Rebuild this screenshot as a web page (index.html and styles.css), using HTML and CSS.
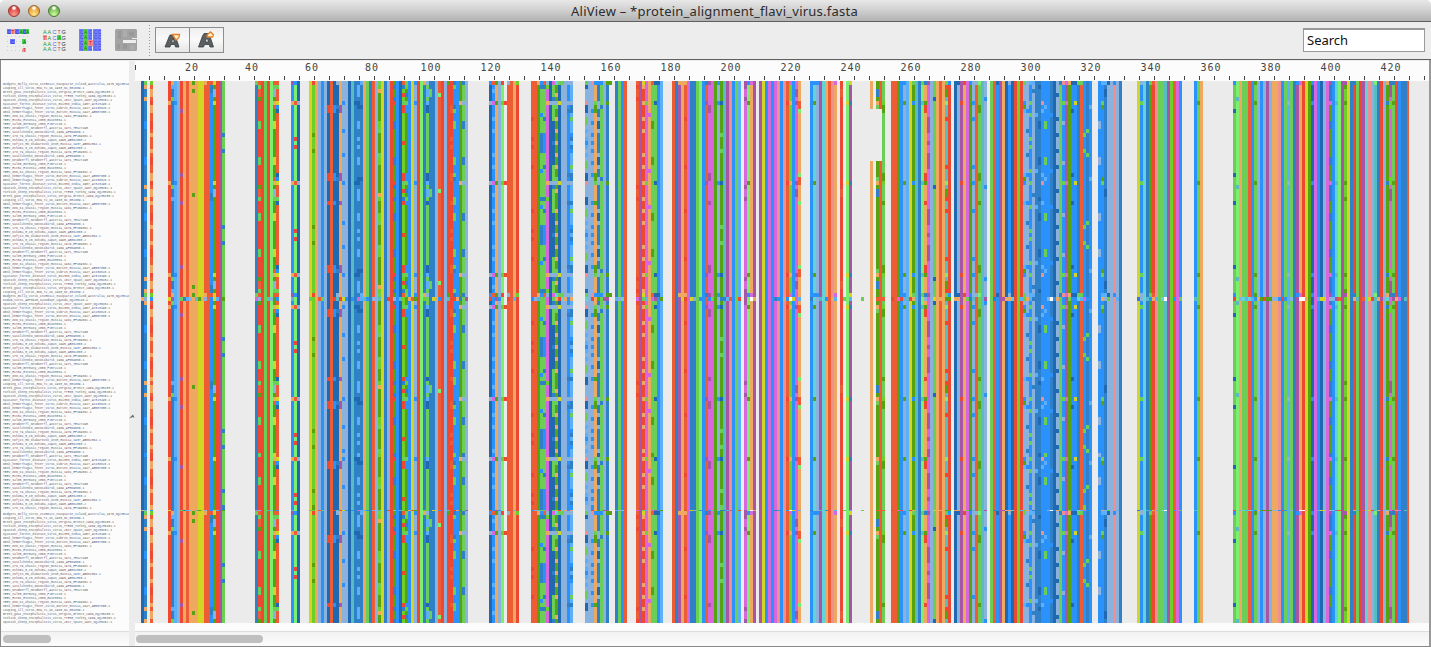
FILE: index.html
```html
<!DOCTYPE html>
<html lang="en">
<head>
<meta charset="utf-8">
<title>AliView</title>
<link rel="stylesheet" href="styles.css">
</head>
<body>
<div class="window">
  <header class="titlebar">
    <div class="lights"><i class="light red"></i><i class="light amber"></i><i class="light green"></i></div>
    <h1 class="title">AliView – *protein_alignment_flavi_virus.fasta</h1>
  </header>
  <div class="toolbar">
    <div class="tools">
      <svg class="tool" viewBox="0 0 24 24">
        <path fill="#6b76ff" d="M1 0h4v5H1zM9 0h4v5H9zM4 10h5v5H4z"/><path fill="#f29a9a" d="M5 0h4v5H5zM16 20h4v3h-4z"/><path fill="#4fd04f" d="M13 0h4v5h-4zM20 0h3v5h-3zM16 10h4v5h-4z"/><path fill="#6b76ff" d="M17 0h3v5h-3z"/>
        <path stroke="#ccd" stroke-dasharray="1 3" d="M1 7.5h22M1 12.500h3M10 12.500h5M21 12.500h2M1 17.500h22M1 21.500h15"/>
        <g class="tiny"><text x="1.500" y="4.500">C</text><text x="5.500" y="4.500" fill="#c00">T</text><text x="9.500" y="4.500">C</text><text x="13.500" y="4.500" fill="#063">A</text><text x="17" y="4.500">C</text><text x="20" y="4.500" fill="#063">A</text><text x="5" y="14.500">C</text><text x="17" y="14.500" fill="#063">A</text><text x="17" y="23" fill="#c00">T</text></g>
      </svg>
      <svg class="tool" viewBox="0 0 24 24">
        <path fill="#f29a9a" d="M1 6h4v5H1z"/><path fill="#4fd04f" d="M15 6h4v5h-4z"/>
        <g class="tiny big">
          <g fill="#1a9a2a"><text x="1" y="4.500">A</text><text x="5.500" y="4.500">A</text><text x="5.500" y="10.500">A</text><text x="15.500" y="10.500">A</text><text x="1" y="16.500">A</text><text x="5.500" y="16.500">A</text><text x="1" y="22">A</text><text x="5.500" y="22">A</text></g>
          <g fill="#5566e8"><text x="10.500" y="4.500">C</text><text x="10.500" y="10.500">C</text><text x="10.500" y="16.500">C</text><text x="10.500" y="22">C</text></g>
          <g fill="#e04040"><text x="15.500" y="4.500">T</text><text x="1" y="10.500">T</text><text x="15.500" y="16.500">T</text><text x="15.500" y="22">T</text></g>
          <g fill="#333"><text x="19.500" y="4.500">G</text><text x="19.500" y="10.500">G</text><text x="19.500" y="16.500">G</text><text x="19.500" y="22">G</text></g>
        </g>
      </svg>
      <svg class="tool" viewBox="0 0 24 24">
        <path fill="#7480ff" d="M1 0h5v22H1zM10 0h4v22h-4zM15 0h8v22h-8z"/><path fill="#55cf45" d="M5 0h5v22H5z"/><path fill="#f08a8a" d="M10 11h5v6h-5z"/>
        <g class="tiny"><g fill="#3b44c8"><text x="2" y="4.500">C</text><text x="2" y="10">C</text><text x="2" y="15.500">C</text><text x="2" y="21">C</text><text x="11" y="4.500">C</text><text x="11" y="10">C</text><text x="11" y="21">C</text><text x="16" y="4.500">C</text><text x="16" y="10">C</text><text x="16" y="15.500">C</text><text x="16" y="21">C</text><text x="20" y="4.500">C</text><text x="20" y="10">C</text><text x="20" y="15.500">C</text><text x="20" y="21">C</text></g><g fill="#187818"><text x="6" y="4.500">A</text><text x="6" y="10">A</text><text x="6" y="15.500">A</text><text x="6" y="21">A</text></g><text x="11" y="16" fill="#c00">T</text></g>
      </svg>
      <svg class="tool" viewBox="0 0 24 24">
        <rect x="1" y="0" width="22" height="22" rx="1.500" fill="#a3a3a3"/><path fill="#999" d="M4 2h3v8H4zM9 15h4v5H9zM15 3h5v4h-5zM3 15h3v5H3z"/><path fill="#acacac" d="M9 1h4v7H9zM16 16h5v5h-5z"/><path fill="#ededed" d="M9 11h13v3H9zM18 9h5v1h-5z"/>
      </svg>
    </div>
    <div class="dots"></div>
    <div class="pair">
      <button class="btn"><svg viewBox="0 0 20 20" width="20" height="20"><path class="glyph" d="M7 5h5l4 12h-3.500l-.8-2.500H7.800L7 17H2l4-10zM8.500 12.200h3L10 8z"/><path class="pen" d="M9.500 4.500h7l-.5 3-3 2.500z"/></svg></button>
      <button class="btn"><svg viewBox="0 0 20 20" width="20" height="20"><path class="glyph" d="M7 3.500h5L16.500 17H13l-.8-2.500H7.500L6.500 17H1.500l4-11zM8.200 12h3.300L10 7z"/><path class="pen" d="M10 7l.5-2.500L13.500 2l3 3-1 2z"/></svg></button>
    </div>
    <div class="search">Search</div>
  </div>
  <main class="main">
    <section class="names">
      <div class="namelist" id="names"></div>
      <div class="scroll"><span class="thumb small"></span></div>
    </section>
    <div class="divider"><svg width="6" height="6" viewBox="0 0 6 6"><path d="M0 4.500 4 .5 5.500 4 4 3z" fill="#666"/></svg></div>
    <section class="align">
      <div class="ruler" id="ruler"></div>
      <canvas class="grid" id="grid" width="1294" height="542"></canvas>
      <div class="gap"></div>
      <div class="scroll"><span class="thumb"></span></div>
    </section>
  </main>
</div>
<script src="app.js"></script>
</body>
</html>
```
FILE: styles.css
```css
* { box-sizing: border-box; }
body { margin: 0; background: #fff; font-family: "Noto Sans", "Open Sans", sans-serif; }
.window { display: flex; flex-direction: column; width: 1431px; height: 647px; overflow: hidden; background: #ededed; border-radius: 5px 5px 0 0; }
.titlebar { display: grid; grid-template-columns: 80px 1fr 80px; align-items: center; height: 22px; border-bottom: 1px solid #606060; background: linear-gradient(#e8e8e8, #cfcfcf 50%, #b2b2b2); }
.lights { display: flex; gap: 8px; padding-left: 8px; }
.light { width: 12px; height: 12px; border-radius: 50%; border: 1px solid #7a3a30; }
.red { background: radial-gradient(circle at 50% 20%, #fff 0 8%, transparent 30%), radial-gradient(circle at 50% 85%, #ff9c90, #d8403a 70%); border-color: #98383a; }
.amber { background: radial-gradient(circle at 50% 20%, #fff 0 8%, transparent 30%), radial-gradient(circle at 50% 85%, #ffe890, #e89a30 70%); border-color: #95642a; }
.green { background: radial-gradient(circle at 50% 20%, #fff 0 8%, transparent 30%), radial-gradient(circle at 50% 85%, #d0ff9a, #69b04a 70%); border-color: #4b7833; }
.title { margin: 0 2px 0 0; text-align: center; font-size: 13px; line-height: 20px; font-weight: 400; letter-spacing: .24px; color: #2c2c2c; white-space: nowrap; }
.toolbar { display: flex; height: 38px; padding: 5px 6px 0 6px; border-bottom: 1px solid #606060; background: #ededed; }
.tools { display: flex; gap: 12px; padding-top: 2px; }
.tool { width: 24px; height: 24px; }
.tiny { font: 4.5px "Liberation Sans", sans-serif; fill: #22b; }
.big { font-size: 5.5px; }
.dots { width: 2px; height: 31px; margin: -2px 4px 0 11px; background: repeating-linear-gradient(#999 0 1px, transparent 1px 3px); background-size: 1px 100%; background-repeat: no-repeat; }
.pair { display: flex; height: 26px; }
.btn { display: flex; align-items: center; justify-content: center; width: 35px; height: 26px; padding: 0; border: 1px solid #8e8e8e; background: linear-gradient(#eee, #fafafa 45%, #e6e6e6); }
.btn + .btn { width: 35px; margin-left: -1px; }
.glyph { fill: #5a5f61; stroke: #383c3d; stroke-width: .8; fill-rule: evenodd; }
.pen { fill: #fff0c8; stroke: #e5812a; stroke-width: 1.300; }
.search { width: 122px; height: 24px; margin: 1px 0 0 auto; padding-left: 3px; border: 1px solid #999; border-top: 2px solid #999; background: #fff; font-size: 13px; line-height: 20px; color: #111; }
.main { display: flex; flex: 1; border-left: 1px solid #888; border-right: 2px solid #999; border-bottom: 1px solid #888; padding-top: 1px; }
.names { display: flex; flex-direction: column; width: 128px; background: #fcfcfc; }
.namelist { flex: 1; overflow: hidden; padding: 21px 0 0 2px; font: 3.08px "Liberation Mono", monospace; color: #5c5f70; }
.name { height: 4px; line-height: 4px; white-space: nowrap; }
.shim { height: 2px; }
.divider { display: flex; width: 6px; padding-top: 353px; background: #ececec; }
.align { display: flex; flex-direction: column; width: 1294px; background: #fcfcfc; }
.ruler { position: relative; height: 20px; }
.tick { position: absolute; top: 15px; width: 1px; height: 4px; background: #444; }
.tick.first { top: 4px; height: 5px; }
.mark { position: absolute; top: 0; width: 40px; text-align: center; font: 10px/13px "DejaVu Sans Mono", monospace; letter-spacing: 1px; color: #444; }
.grid { display: block; width: 1294px; height: 542px; }
.gap { flex: 1; }
.scroll { height: 15px; padding: 3px 0 0 1px; border-top: 1px solid #ddd; background: linear-gradient(#f2f2f2, #fcfcfc); }
.thumb { display: block; width: 127px; height: 8px; border-radius: 4px; background: #bfbfbf; }
.small { width: 48px; margin-left: 1px; }
```
FILE: app.js
```js
const palette = {
  a: '#2068b0', b: '#3080c8', c: '#2c92fb', d: '#5cb0fa', e: '#8ab2dd', f: '#58bcc4', g: '#60d4d8',
  h: '#6bcf57', i: '#6dd028', j: '#55a30f', k: '#7cee70', y: '#d4d424', o: '#eea85f', r: '#ee4832',
  s: '#ee5c36', p: '#a855a6', m: '#d866dc', n: '#ee9090', '.': '#ebebeb', w: '#ffffff'
};

// Consensus residue class of each column, as [first column, classes].
const blocks = [
  [2, 'ab.s'], [11, 'rbderosoooyysscjrph'], [40, 'brrhrkjs'], [52, 'cka'],
  [58, 'yioeceasaaoeeafbbbohbsejybe'], [85, 'rjcaijcyerkbhbbesrerrccjhe'],
  [118, 'acoek.ssor'], [132, 'ssjhhmahoaeecd'], [150, 'eeeobheb'], [160, 'bhcs'],
  [167, 'sprmohhcd'], [179, 'sbposmbbhkcsmmjejfpnchd'], [203, 'mkop'], [208, 'pycmcmncnsicmo'],
  [225, 'cgepgosno'], [235, 'r'], [237, 'kp'], [245, 'o.jsh'], [252, 'ssjcedyjfbkomehosofr'],
  [273, 'aepomjeshfe'], [285, 'hscpoacarireecebbcccbaehcpjccbscbc'], [321, 'ccbeeneb'],
  [334, 'ycgbjrnhhfpismc'], [353, 'cho'], [366, 'hkohhschecepeoonchdhbporyjamcaemjcgkpiybrhrpgnefbrejmhrcbbs']
];

// Differences from the consensus: column, then sequence numbers with their class.
const changes = `3 0h 1o 4o 10c 11c|5 0i 2o 3o 5r 6o 7o 10r 11r 13o|11 5o|12 0o 1d 4h 5b|13 5c|15 7p|19 0j 2j|23 0o
25 0s 1b 2b|26 0y 2e 3e 5y|29 13b|40 0h|41 0s 1h 2s 3s 4j 10h 11h|46 0s 1h 2e 3e 5o 6s 10y 11y|47 1h 5y 6c 7a
52 0p 5o|53 0c 5s 14r|54 5e|59 0r 13j|64 6r 7r|66 6c 7c|67 0e 6b|68 6p 7p|69 5c 12c|73 5a|74 1d 2d 3d 5a 6a 10d 11d 14d
75 0d 6a|81 0h 1i 2o 10i 11i 12h|86 1b 4b 5r 10b 11b|89 0s 1b 3r 5h 6r 7r 15r|90 0h 1i 3b 5h 6c 7c|93 0c 5c|94 0r
96 0o 5b|97 0e 2d 3d 5d 6a 7a|98 2h 3h|101 3k|104 0j|105 6s 7s 14s|106 0b 1h 6b 7h 10h 11h|108 5o|109 0b 5e 10b 11b
118 0c 5e|119 0s 2d 5m 9d 12d|120 0j 5j|122 0r 5i|123 5r|124 0e|125 9s|127 0i|132 9r 14r|134 0o|135 0c 1b 8c 13b 14b 15b
136 0s 1b 9b 13c 14c 15c|137 0e 1i 5o|138 5e|139 0m 4b 5e 10a 11a 12a 13a 14a 15b|140 0g 1j 2j 4j 5e 6h 7j 8j 10j 11j 13j 14j
141 0h 5y|142 0h|144 0e 5e 7b|145 0e 5e 6b 7b 9h 13c 14b|150 0h 1a 5n 6a 7a 9h 10h 12d 14d 15c|152 0n 7c 10c 13c 15c
153 0c 5h 6j 7j|154 0c 5e 6e 9e 12e 10a 11a|155 0c 6b|157 0j 5j|158 0j|167 1r 4r|169 0y 1o 9o 12o 5o|170 5h|171 8m
172 0s 5i 10j 11j|173 0a 5a|174 0a|181 0o|182 0o|183 0o 9r|190 0b 5p|191 0p 6p 7p|194 0c 5c|195 5a 13h
203 0p 1p 4p|204 0c 5j|205 0m|217 5r|218 0m 5o|220 2p 3p 5p|221 5s 6s 7k|226 0c 5j|227 0c|233 0m|235 2s 3s|237 5y|238 0y 5b
247 2b 3b 5o 6h|249 5i 6j 7j|256 0c 5j|259 0h 5c|262 0h 5f|263 0b 5j 6r 7r|264 0p 9p 10p 11p 12p 15p|266 4a|270 0h 1r 2j 3j 5k 9r
271 0c|274 0a|275 5r|276 0r|278 0c|279 5c 9c|280 0e|281 0k 6j 7j|283 4c|287 0a|291 0e|296 0h 5c 6j 7d|297 7c 12b|298 0d 5h 8h 14h
299 0d 2b|300 8d 12b|301 1a 10a 11a|302 5n 7d|303 6d 10h 11h|305 0b 8c|307 3a 9a 13a|308 2h 3h 0b 5h 13h|309 0n 5h 10e|310 0m 5m
311 0o|312 0a 7a|313 0a 5y|314 0h|315 0h|316 13h|317 12h|318 6d|321 10e 11e|322 0d 5h 6j|323 2a 3a 0d|324 0a|326 0c|335 0e 5h
338 0h|339 0s|354 5j|366 0c 7a|367 4f|373 0j 5j|384 5e|387 0c|388 0m|392 0c 5c|398 0p 1b 2b 3b 4b 5m 10b 11b|400 5f|403 0p 1j 5j
406 0b|413 0k|417 0o 5b|418 0b 1p 2p 3p 5i 6i|419 0b 5j`;

const COLS = 425;
const base = Array(432).fill('.');
for (const [start, run] of blocks) [...run].forEach((c, n) => { base[start + n] = c; });
const seqs = Array.from({ length: 16 }, () => base.slice());
for (const item of changes.split(/[|\n]/)) {
  const [col, ...parts] = item.trim().split(' ');
  for (const p of parts) seqs[parseInt(p)][+col] = p.slice(-1);
}

// The divergent Kadam sequence.
let seed = 41;
const rnd = n => { seed = (seed * 1103515245 + 12345) % 2147483648; return Math.floor(seed / 65536) % n; };
seqs.push(base.map(c => (c === '.' ? (rnd(40) ? '.' : 'h') : rnd(10) < 6 ? 'bcdeghjyorspmfiebcosrhdjeofw'[rnd(28)] : c)));

const labels = [
  'Gadgets_Gully_virus_CSIRO122_Macquarie_Island_Australia_1975_DQ235145.1',
  'Louping_ill_virus_369_T2_UK_1963_NC_001809.1',
  'Greek_goat_encephalitis_virus_Vergina_Greece_1969_DQ235153.1',
  'Turkish_sheep_encephalitis_virus_TTE80_Turkey_1969_DQ235151.1',
  'Spanish_sheep_encephalitis_virus_2017_Spain_1987_DQ235152.1',
  'Kyasanur_forest_disease_virus_G11338_India_1957_AY323490.1',
  'Omsk_hemorrhagic_fever_virus_Kubrin_Russia_1947_AY438626.1',
  'Omsk_hemorrhagic_fever_virus_Guriev_Russia_1947_AB507800.1',
  'TBEV_886_84_Khasic_region_Russia_1984_EF469662.1',
  'TBEV_Est54_Estonia_2000_GU183384.1',
  'TBEV_Salem_Germany_2006_FJ572210.1',
  'TBEV_Neudoerfl_Neudoerfl_Austria_1971_TEU27495',
  'TBEV_Vasilchenko_Novosibirsk_1969_AF069066.1',
  'TBEV_178_79_Khasic_region_Russia_1979_EF469661.1',
  'TBEV_Oshima_5_10_Oshima_Japan_1995_AB062063.2',
  'TBEV_Sofjin_HO_Khabarovsk_USSR_Russia_1937_AB062064.1',
  'Kadam_virus_AMP6640_Kaundoye_Uganda_DQ235146.1'
];

const upper = [
  0, 1, 2, 3, 4, 5, 6, 7, 8, 9, 10, 11, 12, 13, 14, 15, 14, 13, 12, 11, 10, 9, 8, 7, 6, 5, 4, 3, 2, 1,
  7, 8, 9, 10, 11, 12, 13, 14, 15, 14, 13, 12, 11, 10, 9, 8, 7, 6, 5, 4, 3, 2, 1, 0, 16,
  4, 5, 6, 7, 8, 9, 10, 11, 12, 13, 14, 15, 14, 13, 12, 11, 10, 9, 8, 7, 1, 2, 3, 4, 5, 6, 7, 8, 9, 10,
  11, 12, 13, 14, 15, 14, 13, 12, 11, 5, 6, 7, 8, 9, 10, 11, 12, 13, 14, 15, 14, 13
];
const lower = [0, 1, 2, 3, 4, 5, 6, 7, 8, 9, 10, 11, 12, 13, 14, 15, 14, 13, 12, 11, 10, 9, 8, 7, 1, 2, 3, 4];

const ctx = document.getElementById('grid').getContext('2d');
ctx.fillStyle = palette['.'];
ctx.fillRect(0, 0, 1294, 542);

function drawRow(seq, y, h, row) {
  for (let x = 0; x < COLS; x++) {
    const c = seq[x];
    if (c === '.' || (row >= 7 && row <= 19 && x >= 245 && x <= 248)) continue;
    ctx.fillStyle = palette[c];
    ctx.fillRect(x * 3, y, x === COLS - 1 ? 2 : 3, h);
  }
}
upper.forEach((s, n) => drawRow(seqs[s], n * 4, 4, n));
drawRow(seqs[13], 428, 1, -1);
drawRow(seqs[16], 429, 1, -1);
lower.forEach((s, n) => drawRow(seqs[s], 430 + n * 4, 4, -1));

const line = s => `<div class="name">${labels[s]}</div>`;
document.getElementById('names').innerHTML =
  upper.map(line).join('') + '<div class="shim"></div>' + lower.map(line).join('');

let marks = '<i class="tick first" style="left:0"></i>';
for (let x = 14; x < 1294; x += 15) marks += `<i class="tick" style="left:${x}px"></i>`;
for (let n = 20; n <= 420; n += 20) marks += `<span class="mark" style="left:${n * 3 - (n < 100 ? 23 : 24)}px">${n}</span>`;
document.getElementById('ruler').innerHTML = marks;
```
